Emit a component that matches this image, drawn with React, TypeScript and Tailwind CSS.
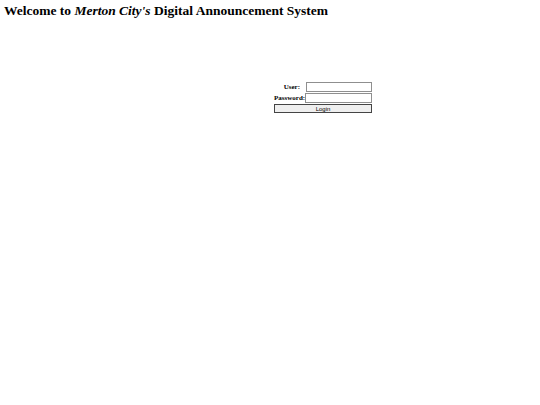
export default function App() {
  return (
    <div className="min-h-[405px] w-[540px] bg-white text-black" style={{ fontFamily: '"Liberation Serif", serif' }}>
      <h1 className="pl-[4px] pt-[3px] text-[13.5px] font-bold leading-[16px]">
        Welcome to <i>Merton City's</i> Digital Announcement System
      </h1>
      <form className="ml-[274px] mt-[63px] flex w-[98px] flex-col gap-[1px]">
        <div className="flex h-[10px] items-center">
          <label className="w-[32px] pr-[6px] text-right text-[7px] font-bold leading-none">User:</label>
          <input className="box-border h-[10px] w-[66px] border border-[#8f8f8f] bg-white" />
        </div>
        <div className="flex h-[10px] items-center">
          <label className="w-[31px] text-left text-[7px] font-bold leading-none">Password:</label>
          <input type="password" className="box-border h-[10px] w-[67px] border border-[#8f8f8f] bg-white" />
        </div>
        <button
          type="button"
          className="box-border flex h-[9px] w-[98px] items-center justify-center border border-[#444] bg-[#efefef] text-[6px] leading-none"
          style={{ fontFamily: '"Liberation Sans", sans-serif' }}
        >
          Login
        </button>
      </form>
    </div>
  );
}
